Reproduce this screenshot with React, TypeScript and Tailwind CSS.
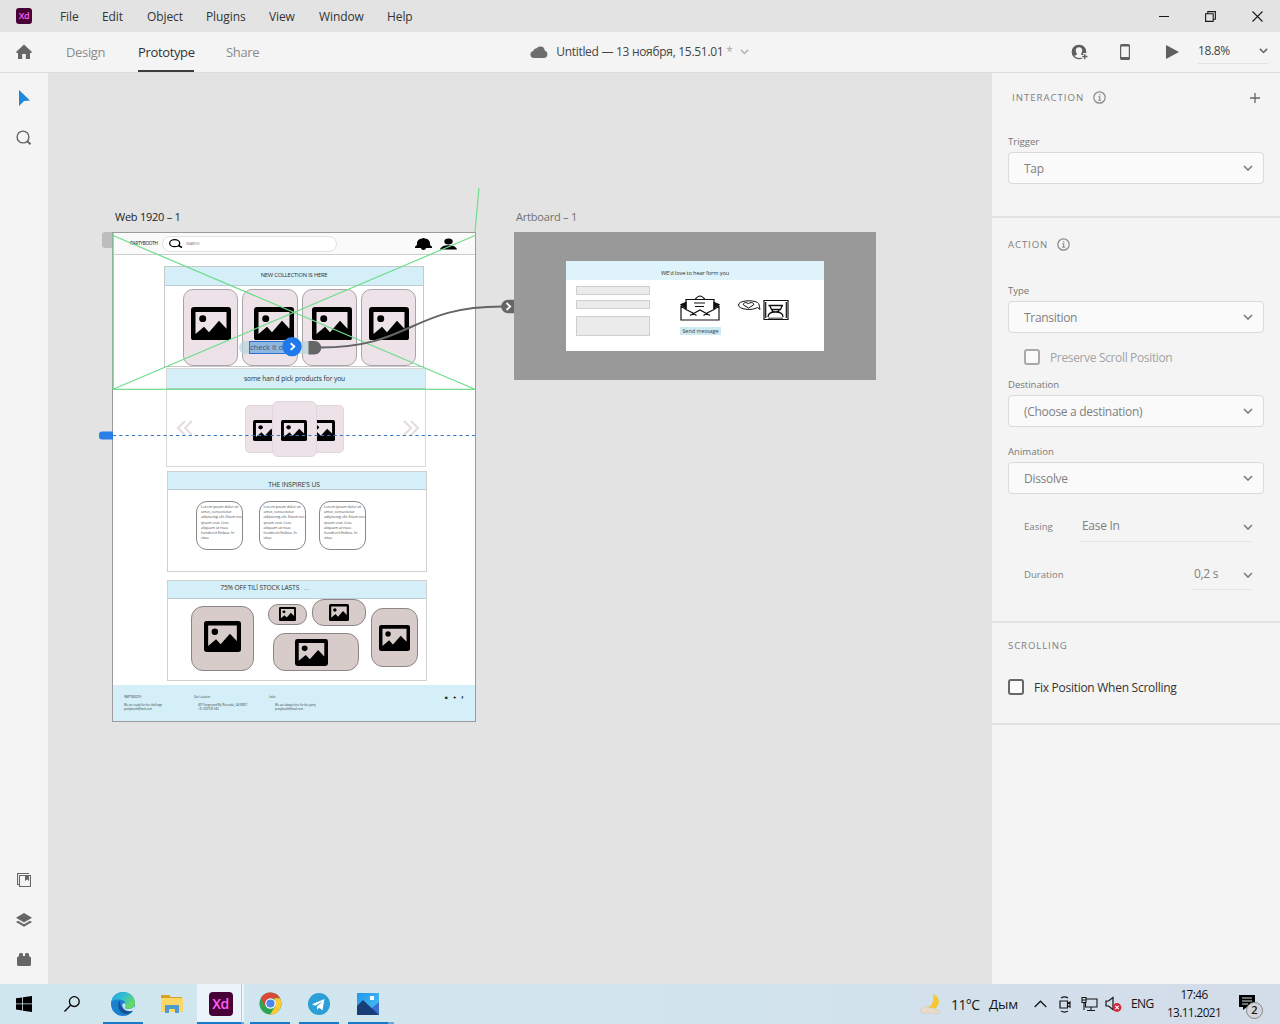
import type { ReactNode } from "react";

const cx = (...c: (string | undefined)[]) => c.filter(Boolean).join(" ");

function Chevron({ className, w = 10 }: { className?: string; w?: number }) {
  return (
    <svg width={w} height={w * 0.6} viewBox="0 0 10 6" fill="none" stroke="currentColor" strokeWidth="1.7" className={cx("shrink-0", className)}>
      <path d="M1 1l4 4 4-4" />
    </svg>
  );
}

function MenuBar() {
  return (
    <header className="flex h-8 shrink-0 items-center bg-[#e3e3e3] text-[12px] tracking-[-0.1px] text-[#333]">
      <span className="ml-4 flex h-4 w-4 shrink-0 items-center justify-center rounded-[3px] bg-[#470137] text-[9px] font-semibold tracking-[-0.3px] text-[#ff61f6]">Xd</span>
      <nav className="flex pt-[2px]">
        <span className="ml-7 w-[42px]">File</span>
        <span className="w-[45px]">Edit</span>
        <span className="w-[59px]">Object</span>
        <span className="w-[63px]">Plugins</span>
        <span className="w-[50px]">View</span>
        <span className="w-[68px]">Window</span>
        <span>Help</span>
      </nav>
      <div className="ml-auto mr-[17px] flex items-center gap-9 text-[#1a1a1a]">
        <svg width="11" height="11" viewBox="0 0 11 11" stroke="currentColor"><path d="M1 5.500h10" /></svg>
        <svg width="11" height="11" viewBox="0 0 11 11" fill="none" stroke="currentColor" strokeWidth="1.1"><path d="M.6 2.800h7.600v7.600H.6zM2.800 2.800V.6h7.600v7.600H8.200" /></svg>
        <svg width="11" height="11" viewBox="0 0 11 11" stroke="currentColor" strokeWidth="1.1"><path d="M.5.5l10 10M10.500.5l-10 10" /></svg>
      </div>
    </header>
  );
}

function Toolbar() {
  return (
    <div className="flex h-[41px] shrink-0 border-b border-[#dcdcdc] bg-[#f4f4f4] text-[13px] tracking-[-0.35px] text-[#8b8b8b]">
      <svg className="ml-4 mt-3 shrink-0 text-[#666]" width="16" height="16" viewBox="0 0 16 16" fill="currentColor"><path d="M8 .6L16 8l-.8.900H14V15H9.800V10H6.200v5H2V8.900H.8L0 8z" /></svg>
      <div className="ml-[34px] flex leading-[40px]">
        <span className="w-[72px]">Design</span>
        <span className="h-10 w-[56px] border-b-2 border-[#3c3c3c] text-[#333]">Prototype</span>
        <span className="ml-8">Share</span>
      </div>
      <div className="ml-[271px] flex h-10 items-center text-[12px] text-[#444]">
        <svg width="18" height="12" viewBox="0 0 18 12" className="mr-2 fill-[#6e6e6e]"><path d="M4 12a3.600 3.600 0 01-.8-7.100A3.500 3.500 0 016.600 2.300 4.500 4.500 0 0114.700 4.500 3.900 3.900 0 0114.500 12z" /></svg>
        <span className="w-[167px] whitespace-nowrap tracking-[-0.3px]">Untitled — 13 ноября, 15.51.01</span>
        <span className="ml-[3px] w-[13px] text-[#aaa]">*</span>
        <Chevron w={9} className="ml-px text-[#b5b5b5]" />
      </div>
      <div className="ml-auto flex h-10 items-center text-[#5f5f5f]">
        <svg width="18" height="17" viewBox="0 0 18 17" fill="none">
          <circle cx="8" cy="8" r="6.700" stroke="currentColor" strokeWidth="1.200" />
          <path d="M8 1A7 7 0 002.300 12.200C4 11.200 6 11.400 6 10 4 7.500 4.300 3.200 8 3.200s4 4.300 2 6.800c0 1.400 2.200 1.200 3.700 2.200A7 7 0 008 1z" fill="currentColor" />
          <path d="M10 12.500h8M13.700 9v8" stroke="#f4f4f4" strokeWidth="3" /><path d="M11.200 12.500h5.300M13.800 10v5.300" stroke="currentColor" strokeWidth="1.300" />
        </svg>
        <svg className="ml-[31px]" width="10" height="16" viewBox="0 0 10 16"><rect x=".6" y=".6" width="8.800" height="14.800" rx="1" fill="none" stroke="currentColor" strokeWidth="1.200" /><path d="M1 1h8v1.500H1zM1 13h8v2.500H1z" fill="currentColor" /></svg>
        <svg className="ml-[36px]" width="13" height="14" viewBox="0 0 13 14" fill="currentColor"><path d="M0 0l13 7-13 7z" /></svg>
        <div className="ml-[19px] mr-3 flex h-6 w-[70px] items-center justify-between border-b border-[#e2e2e2] pb-px text-[12px] tracking-[-0.4px] text-[#444]">
          18.8%
          <Chevron w={9} className="text-[#666]" />
        </div>
      </div>
    </div>
  );
}

function ToolRail() {
  return (
    <aside className="flex w-12 shrink-0 flex-col items-center bg-[#f4f4f4] text-[#666]">
      <svg className="mt-[17px]" width="12" height="16" viewBox="0 0 12 16"><path d="M1 0l11 10.500-6 .6L1 16z" fill="#1e88dc" /></svg>
      <svg className="mt-6" width="16" height="16" viewBox="0 0 16 16" fill="none" stroke="currentColor"><circle cx="7" cy="7" r="5.900" strokeWidth="1.400" /><path d="M11 11l3.500 3.300" strokeWidth="2" /></svg>
      <svg className="mt-auto" width="14" height="14" viewBox="0 0 14 14" fill="none" stroke="currentColor" strokeWidth="1.100"><path d="M2.500 2.500h11v11h-11zM11.500 1V.5H.5v11h1.800" /><path d="M8 2.500h4V8L10 6.500 8 8z" fill="currentColor" stroke="none" /></svg>
      <svg className="mt-[25px]" width="16" height="16" viewBox="0 0 16 16" fill="currentColor"><path d="M8 1l8 4.800-8 4.800-8-4.800z" /><path d="M2 8.700l6 3.600 6-3.600 2 1.200-8 4.900-8-4.900z" /></svg>
      <svg className="mb-[18px] mt-[25px]" width="14" height="13" viewBox="0 0 14 13" fill="currentColor"><path d="M0 4.500L2 3V1l1-1h2l1 1v2h2V1l1-1h2l1 1v2l2 1.500V12l-1 1H1l-1-1z" /></svg>
    </aside>
  );
}

/* Placeholder picture glyph; the window shape is cut out in the colour behind it. */
function Picture({ w, h, bg = "#ece2e8", className }: { w: number; h: number; bg?: string; className?: string }) {
  return (
    <svg width={w} height={h} viewBox="0 0 40 34" preserveAspectRatio="none" className={cx("block shrink-0", className)}>
      <rect width="40" height="34" rx="3" />
      <path d="M4.500 5h31v17L28 14 18 25.500 13 20 4.500 27.500z" fill={bg} />
      <circle cx="11.700" cy="11.800" r="3.500" />
    </svg>
  );
}

function Band({ children, className }: { children: ReactNode; className?: string }) {
  return <div className={cx("flex items-center justify-center whitespace-nowrap border-b border-[#bcccd2] bg-[#d4eff8] text-[#333]", className)}>{children}</div>;
}

function LoremCard({ className }: { className?: string }) {
  return (
    <div className={cx("h-[49px] w-[47px] shrink-0 whitespace-nowrap rounded-[11px] border border-[#888] bg-white pl-1 pt-[2px] text-[3.900px] leading-[5.200px] tracking-[-0.13px] text-[#555]", className)}>
      Lorem ipsum dolor sit<br />amet, consectetur<br />adipiscing elit. Etiam nec<br />ipsum erat. Cras<br />aliquam ut risus<br />hendrerit finibus. In<br />vitae
    </div>
  );
}

function Tile({ className, w, h }: { className: string; w: number; h: number }) {
  return (
    <div className={cx("absolute border border-[#8d8585] bg-[#d8ccca]", className)}>
      <Picture w={w} h={h} bg="#d8ccca" />
    </div>
  );
}

function FooterCol({ head, a, b, className }: { head: string; a: string; b: string; className: string }) {
  return (
    <div className={cx("whitespace-nowrap text-[2.700px] leading-[4px] text-[#333]", className)}>
      <div className="mb-1">{head}</div>
      <div className="pl-[var(--indent)]">{a}</div>
      <div className="pl-[var(--indent)]">{b}</div>
    </div>
  );
}

function WebArtboard() {
  return (
    <div className="absolute left-[64px] top-[159px] flex h-[490px] w-[364px] flex-col border border-[#9b9b9b] bg-white">
      <div className="flex h-[22px] shrink-0 items-center border-b border-[#ccc] bg-[#fafafa]">
        <span className="ml-[17px] w-[32px] text-[4.700px] tracking-[-0.25px] text-[#111]">PARTYBOOTH</span>
        <div className="flex h-4 w-[175px] items-center rounded-full border border-[#e2e2e2] bg-white pl-[5px]">
          <svg width="15" height="9" viewBox="0 0 15 9" fill="none" stroke="black" strokeWidth="1.300"><ellipse cx="6.700" cy="4.200" rx="5" ry="3.500" /><path d="M10.300 6.500l3.700 2" strokeWidth="1.600" /></svg>
          <span className="ml-[3px] text-[4px] tracking-[-0.3px] text-[#777]">SEARCH</span>
        </div>
        <svg className="ml-[78px]" width="17" height="12" viewBox="0 0 17 12"><path d="M7.500 0h2v.5c4 .3 5.500 2.500 5.500 5.200 0 1.300.5 2.300 2 2.800V10H0V8.500c1.500-.5 2-1.500 2-2.800C2 3 3.500.8 7.500.500zM6 10h5c0 2.500-5 2.500-5 0z" /></svg>
        <svg className="ml-2" width="17" height="12" viewBox="0 0 17 12"><ellipse cx="8.500" cy="3.400" rx="4.200" ry="3" /><path d="M0 11.500C.5 8.800 4.500 7.300 8.500 7.300s8 1.500 8.500 4.200z" /></svg>
      </div>

      <section className="ml-[51px] mt-[11px] h-[101px] w-[260px] shrink-0 border border-[#c8c8c8]">
        <Band className="h-[19px] pb-px text-[5.800px] tracking-[-0.21px]">NEW COLLECTION IS HERE</Band>
        <div className="ml-[18px] mt-[3px] flex gap-1">
          {["ml-[6.700px]", "ml-[10.700px]", "ml-[9.300px]", "ml-[6.700px]"].map((m, i) => (
            <div key={i} className="h-[77px] w-[55.300px] rounded-[10px] border border-[#aaa4a8] bg-[#ece2e8] pt-[16.500px]">
              <Picture w={40} h={33.5} className={m} />
            </div>
          ))}
        </div>
      </section>

      <section className="ml-[53px] mt-px h-[99px] w-[260px] shrink-0 border border-[#d8d8d8]">
        <Band className="h-[20px] pr-[3px] pt-px text-[6.700px] tracking-[-0.1px]">some han d pick products for you</Band>
        <div className="mt-[12px] flex items-center justify-between pl-[9px] pr-[5px]">
          <svg className="mb-[2px]" width="17" height="16" viewBox="0 0 17 16" fill="none" stroke="#e6dce2" strokeWidth="2.200"><path d="M9 1L2 8l7 7M16 1L9 8l7 7" /></svg>
          <div className="mr-2 flex items-center">
            <div className="flex h-[48px] w-[27px] items-center overflow-hidden rounded-l-[5px] border border-r-0 border-[#e0d5db] bg-[#ece2e8] pl-[7px] pt-[3px]"><Picture w={26} h={21} /></div>
            <div className="flex h-[56px] w-[45px] items-center justify-center rounded-[6px] border border-[#e0d5db] bg-[#ece2e8] pt-[3px]"><Picture w={26} h={21} /></div>
            <div className="flex h-[48px] w-[27px] items-center justify-end overflow-hidden rounded-r-[5px] border border-l-0 border-[#e0d5db] bg-[#ece2e8] pr-[8px] pt-[3px]"><Picture w={26} h={21} /></div>
          </div>
          <svg className="mb-[2px]" width="17" height="16" viewBox="0 0 17 16" fill="none" stroke="#e6dce2" strokeWidth="2.200"><path d="M1 1l7 7-7 7M8 1l7 7-7 7" /></svg>
        </div>
      </section>

      <section className="ml-[54px] mt-1 h-[101px] w-[260px] shrink-0 border border-[#d0d0d0]">
        <Band className="h-[18px] pr-[6px] pt-[9px] text-[6.700px] tracking-[-0.15px]">THE INSPIRE'S US</Band>
        <div className="ml-[28px] mt-[11px] flex">
          <LoremCard />
          <LoremCard className="ml-[15.500px]" />
          <LoremCard className="ml-[13.500px]" />
        </div>
      </section>

      <section className="relative ml-[54px] mt-2 h-[101px] w-[260px] shrink-0 border border-[#d0d0d0]">
        <Band className="h-[18px] pb-[3px] pr-[65px] text-[6.700px] tracking-[-0.15px]">75% OFF TILl STOCK LASTS &nbsp; <span className="text-[#999]">&nbsp;...</span></Band>
        <Tile className="left-[23px] top-[25px] h-[65px] w-[63px] rounded-[12px] pl-3 pt-[14px]" w={37} h={31} />
        <Tile className="left-[100px] top-[23px] h-[21px] w-[39px] rounded-[10px] pl-[10px] pt-[2px]" w={17} h={14} />
        <Tile className="left-[144px] top-[18px] h-[27px] w-[54px] rounded-[12px] pl-4 pt-1" w={20} h={17} />
        <Tile className="left-[105px] top-[52px] h-[38px] w-[86px] rounded-[12px] pl-[21px] pt-[5px]" w={33} h={27} />
        <Tile className="left-[203px] top-[27px] h-[59px] w-[47px] rounded-[12px] pl-[7px] pt-[16px]" w={31} h={26} />
      </section>

      <footer className="mt-auto flex h-[36px] shrink-0 bg-[#d4eff8] pt-[9.500px]">
        <FooterCol className="ml-[11px] w-[70px] [--indent:0px]" head="PARTYBOOTH" a="We are ready for the challenge" b="partybooth@mail.com" />
        <FooterCol className="w-[75px] [--indent:4px]" head="Our Location" a="407 Fairground Rd, Riverside, CA 90857" b="+91 200 976 543" />
        <FooterCol className="w-[176px] [--indent:6px]" head="Links" a="We are always here for the party" b="partybooth@mail.com" />
        <div className="flex gap-[5.500px] text-[4px] font-bold leading-[5px]"><span>◙</span><span>✦</span><span>f</span></div>
      </footer>
    </div>
  );
}

function ContactArtboard() {
  return (
    <div className="absolute left-[466px] top-[159px] h-[148px] w-[362px] bg-[#999] pl-[52px] pt-[29px]">
      <div className="h-[90px] w-[258px] bg-white">
        <div className="flex h-[19px] items-center justify-center bg-[#dff3fa] pt-[5px] text-[5.700px] tracking-[-0.14px] text-[#333]">WE'd love to hear form you</div>
        <div className="flex">
          <div className="ml-[10px] w-[74px] pt-[6px]">
            <div className="h-[9px] border border-[#cfcfcf] bg-[#ebebeb]" />
            <div className="mt-[5px] h-[9px] border border-[#cfcfcf] bg-[#ebebeb]" />
            <div className="mt-[7px] h-5 border border-[#cfcfcf] bg-[#ebebeb]" />
          </div>
          <div className="ml-[30px] w-[41px] pt-[15px]">
            <svg width="40" height="26" viewBox="0 0 40 26" fill="none" stroke="#111" strokeWidth="1.200">
              <path d="M6 8.500L1 11v14h38V11l-5-2.500M1 11l5 3.500 6 3M39 11l-5 3.500-6 3M6 14V4.500h28V14M15 4.500C17 2 18.500 1 20 1s3 1 5 3.500M10 20.500l10-5.500 10 5.500M12 17.500l4.500 3M28 17.500l-4.500 3M14 8h11M15 11.500h9" />
              <path d="M1 9.500l5-2v5.500zM39 9.500l-5-2v5.500z" fill="#111" />
            </svg>
            <div className="mt-[6px] h-[8px] whitespace-nowrap bg-[#cdeaf2] text-center text-[5.500px] leading-[8px] tracking-[-0.05px] text-[#345]">Send message</div>
          </div>
          <svg className="ml-[16px] mt-[19px]" width="53" height="24" viewBox="0 0 53 24" fill="none" stroke="#111" strokeWidth="1">
            <path d="M20.500 8.500C15 12 1.500 10.500 1.500 6S15 .5 20.500 3.500c2 1.300 1.500 3 2.500 7zM11.500 9L6.500 6C5.500 3.800 9 2.800 11.500 4.500 14 2.800 17.500 3.800 16.500 6z" />
            <path d="M27 1.500h24v19H27zM28.700 3v16M49.300 3v16" strokeWidth="1.200" />
            <path d="M31.500 6.500h14.500M33 7l1.500 3.500h9L45 7M35 10.500c0 3.500 7 3.500 7 0M31 18c0-3.500 3-5 7.500-5s7.500 1.500 7.500 5" strokeWidth="1.300" />
            <path d="M31 18.500h15v1.500H31z" fill="#777" stroke="none" />
          </svg>
        </div>
      </div>
    </div>
  );
}

function Canvas() {
  return (
    <main className="relative min-w-0 flex-1 overflow-hidden bg-[#e3e3e3]">
      <span className="absolute left-[67px] top-[136px] text-[11px] leading-4 tracking-[-0.25px] text-[#222]">Web 1920 – 1</span>
      <span className="absolute left-[468px] top-[136px] text-[11px] leading-4 tracking-[-0.2px] text-[#707070]">Artboard – 1</span>
      <div className="absolute left-[54px] top-[159px] h-[16px] w-[10px] rounded-l-[3px] bg-[#bdbdbd]" />
      <WebArtboard />
      <ContactArtboard />
      <div className="absolute left-[191px] top-[268px] h-[13px] w-[82px] rounded-full bg-[#b9d4dc]/70" />
      <div className="absolute left-[201px] top-[268px] h-[13px] w-[48px] overflow-hidden whitespace-nowrap border border-[#2b72cf] bg-[#8fb6df] text-[7.500px] leading-[11px] text-[#3b5475]">check it out</div>
      <svg className="absolute left-0 top-0" width="943" height="911" viewBox="48 73 943 911" fill="none">
        <path d="M113 235.500L475 389.300M475 235.500L113 389.300M113.200 233v156.300H475M475 232l4-44" stroke="#6fdd8c" strokeWidth="1.200" />
        <path d="M113 435.500h362" stroke="#3576bd" strokeWidth="1.200" strokeDasharray="3.200 3.100" />
        <path d="M99 434.500a3 3 0 013-3h11v8h-11a3 3 0 01-3-3z" fill="#2a7fe8" />
        <path d="M320 347.500C411 347.500 411 306.500 502 306.500" stroke="#646464" strokeWidth="2" />
        <path d="M308.500 341h6a6.800 6.800 0 010 13.600h-6zM514 299.700h-6a6.800 6.800 0 000 13.600h6z" fill="#666" />
        <path d="M506.500 303l3.800 3.500-3.800 3.500" stroke="#fff" strokeWidth="1.700" />
        <circle cx="292" cy="346.600" r="9.700" fill="#1f79ea" />
        <path d="M290.700 343.300l3.600 3.300-3.600 3.300" stroke="#fff" strokeWidth="1.900" />
      </svg>
    </main>
  );
}

function Info() {
  return (
    <svg width="13" height="13" viewBox="0 0 13 13" fill="none" stroke="#888" className="shrink-0"><circle cx="6.500" cy="6.500" r="5.700" strokeWidth="1.200" /><path d="M5.300 5.800h1.400v3.400M5.200 9.300h2.900M6 3.700h1.300" strokeWidth="1.100" /></svg>
  );
}

function Field({ label, value, className }: { label: string; value: string; className?: string }) {
  return (
    <div className={className}>
      <div className="h-[19px] pt-px text-[9.600px] leading-4 tracking-[-0.03px] text-[#777]">{label}</div>
      <div className="flex h-8 items-center justify-between rounded-[4px] border border-[#dadada] bg-[#fafafa] pl-[15px] pr-[10px] text-[12px] tracking-[-0.3px]">
        <span className="pt-px">{value}</span>
        <Chevron />
      </div>
    </div>
  );
}

function Inspector() {
  return (
    <aside className="flex w-[288px] shrink-0 flex-col bg-[#f4f4f4] text-[#808080]">
      <section className="h-[145px] border-b-2 border-[#e2e2e2] px-4 pt-4">
        <div className="flex h-4 items-center pl-1 text-[9.600px] tracking-[1px]">
          <span className="w-[81px] pt-[3px]">INTERACTION</span><Info />
          <svg className="ml-auto mr-1 mt-px" width="10" height="10" viewBox="0 0 10 10" stroke="#666" strokeWidth="1.300"><path d="M0 5h10M5 0v10" /></svg>
        </div>
        <Field className="mt-7" label="Trigger" value="Tap" />
      </section>
      <section className="h-[405px] border-b-2 border-[#e2e2e2] px-4 pt-[18px]">
        <div className="flex h-4 items-center text-[9.600px] tracking-[0.9px]"><span className="w-[49px] pt-[3px]">ACTION</span><Info /></div>
        <Field className="mt-[30px]" label="Type" value="Transition" />
        <div className="ml-4 mt-4 flex h-4 items-center gap-[10px] text-[12px] tracking-[-0.35px] text-[#a3a3a3]">
          <span className="h-4 w-4 rounded-[3px] border-2 border-[#a9a9a9] bg-[#fafafa]" /><span className="pt-[2px]">Preserve Scroll Position</span>
        </div>
        <Field className="mt-[11px]" label="Destination" value="(Choose a destination)" />
        <Field className="mt-4" label="Animation" value="Dissolve" />
        <div className="ml-4 mr-3 mt-[17px] flex h-[31px] items-center">
          <span className="w-[56px] pt-[2px] text-[9.600px]">Easing</span>
          <div className="flex h-full flex-1 items-center justify-between border-b border-[#e4e4e4] pl-[2px] text-[12px] tracking-[-0.3px]">Ease In<Chevron className="-mr-px mt-[2px]" /></div>
        </div>
        <div className="ml-4 mr-3 mt-[17px] flex h-[31px] items-center">
          <span className="w-[168px] pt-[2px] text-[9.600px]">Duration</span>
          <div className="flex h-full flex-1 items-center justify-between border-b border-[#e4e4e4] pl-[2px] text-[12px] tracking-[-0.3px]">0,2 s<Chevron className="-mr-px mt-[2px]" /></div>
        </div>
      </section>
      <section className="h-[102px] border-b-2 border-[#e2e2e2] px-4 pt-[15px]">
        <div className="text-[9.600px] leading-4 tracking-[0.9px]">SCROLLING</div>
        <div className="mt-[25px] flex h-4 items-center gap-[10px] text-[12px] tracking-[-0.27px] text-[#333]">
          <span className="h-4 w-4 rounded-[3px] border-2 border-[#666] bg-[#fafafa]" /><span className="pt-[2px]">Fix Position When Scrolling</span>
        </div>
      </section>
    </aside>
  );
}

function App({ children }: { children: ReactNode }) {
  return <div className="mr-[9px] flex h-10 w-10 items-center justify-center border-b-2 border-[#1979ca] pt-px">{children}</div>;
}

function Taskbar() {
  return (
    <footer className="flex h-10 shrink-0 items-center bg-linear-to-r from-[#d0e6ee] via-[#d1e5ee] to-[#d3dce9] text-[#151515]">
      <svg className="ml-4" width="16" height="16" viewBox="0 0 16 16"><path d="M0 2.300l6.200-.9v6.100H0zM7 1.300L16 0v7.500H7zM0 8.300h6.200v6.200L0 13.600zM7 8.300h9V16l-9-1.300z" /></svg>
      <svg className="ml-8" width="16" height="16" viewBox="0 0 16 16" fill="none" stroke="black" strokeWidth="1.300"><circle cx="10.300" cy="5.600" r="4.900" /><path d="M6.600 9.300L.5 15.500" /></svg>
      <div className="ml-[23px] flex">
        <App>
          <svg width="24" height="24" viewBox="0 0 24 24">
            <defs><linearGradient id="edgeTop" x1="0" y1="0" x2="1" y2=".6"><stop stopColor="#2a9fe0" /><stop offset=".5" stopColor="#31bfd0" /><stop offset="1" stopColor="#6bdc5a" /></linearGradient></defs>
            <circle cx="12" cy="12" r="12" fill="#1a80cf" />
            <path d="M.4 9.500C1.600 4 6.200 0 12 0c7 0 12 5 12 10.500 0 4-3 6.300-6.300 6.300-2.700 0-4.500-1-3.800-2 1.300-1.700 1-6.800-5-7.300C5 7.200 1.800 7.800.4 9.500z" fill="url(#edgeTop)" />
            <path d="M9 8.500c-3 3-2.500 11 4.500 13.500 4 .5 7-.8 9-4-1.500.7-3 1-4.500 1-5 0-9.500-4-9-10.500z" fill="#155394" />
            <path d="M14 11.500c1 1.500.5 2.700-.1 3.400-.7 1 1 2 3.800 2 2.500 0 4.500-1.200 5.500-3L24 18l-1.800.7C16 20.500 11.500 17 11.300 13.500c0-1.500 1.500-2.500 2.700-2z" fill="#d0e6ee" />
          </svg>
        </App>
        <div className="mr-[5px] flex h-10 w-10 items-center justify-center">
          <svg width="22" height="20" viewBox="0 0 22 20"><path d="M0 1h8l2 2h11v5H0z" fill="#d9a021" /><path d="M0 4h22v14H0z" fill="#fbd768" /><path d="M4 19v-8h14v8h-4v-4H8v4z" fill="#4f9bd0" /></svg>
        </div>
        <div className="flex h-10 w-[45px] items-center justify-center border-b-2 border-r border-b-[#1979ca] border-r-[#aecfe0] bg-[#eaf4fa] pl-[3px] pt-px">
          <span className="flex h-6 w-6 items-center justify-center rounded-[4px] bg-[#470137] text-[14px] font-semibold tracking-[-0.5px] text-[#ff61f6]">Xd</span>
        </div>
        <div className="mr-[6px] h-10 w-[2px] border-b-2 border-[#66a9d8] bg-[#eaf4fa]" />
        <App>
          <svg width="23" height="23" viewBox="0 0 48 48"><circle cx="24" cy="24" r="23" fill="#2fa455" /><path d="M24 1a23 23 0 0120 12H24L13 30 4 12.500A23 23 0 0124 1z" fill="#dc4838" /><path d="M44 13a23 23 0 01-21 34l11-17-2-17z" fill="#fbca35" /><circle cx="24" cy="24" r="11" fill="#fff" /><circle cx="24" cy="24" r="8.500" fill="#4b86ee" /></svg>
        </App>
        <App>
          <svg width="22" height="22" viewBox="0 0 22 22"><circle cx="11" cy="11" r="11" fill="#2c9fd6" /><path d="M4 11.300L16.500 6l-2 11.300-3.500-2.600-2 2v-3.300l5.500-5-7.300 4.300z" fill="#fff" /></svg>
        </App>
        <div className="flex h-10 w-10 items-center justify-center border-b-2 border-[#1979ca] pt-px">
          <svg width="22" height="22" viewBox="0 0 22 22"><defs><linearGradient id="sky" x2="1" y2="1"><stop stopColor="#2496ec" /><stop offset="1" stopColor="#4cc3f2" /></linearGradient></defs><path d="M0 0h22v22H0z" fill="url(#sky)" /><path d="M22 9v13h-9l-3-3z" fill="#3a70cf" /><path d="M0 13l6-6 16 15H0z" fill="#193f78" /><path d="M13 3h4v4h-4z" fill="#f2f8ff" /></svg>
        </div>
        <div className="h-10 w-[6px] border-b-2 border-[#66a9d8]" />
      </div>
      <div className="ml-auto flex h-10 items-center">
        <svg width="24" height="22" viewBox="0 0 24 22"><path d="M13 1c6 2 8 9 3 14-4 3-9 3-12 0 6 0 11-5 9-14z" fill="#f8c72e" /><path d="M2 20a2.500 2.500 0 011-4.800 4.500 4.500 0 017-.2c3-1 5 .5 5 2h4a1.800 1.800 0 010 3.300z" fill="#eadccb" stroke="#d3bfa5" strokeWidth=".5" /></svg>
        <span className="ml-[7px] w-[38px] text-[14px] tracking-[-0.6px]">11°C</span>
        <span className="w-[45px] pt-px text-[13.500px] tracking-[-0.2px]">Дым</span>
        <svg width="13" height="8" viewBox="0 0 13 8" fill="none" stroke="currentColor" strokeWidth="1.300"><path d="M.7 7l5.800-5.800L12.300 7" /></svg>
        <svg className="ml-3" width="12" height="17" viewBox="0 0 12 17" fill="none" stroke="currentColor" strokeWidth="1.200"><path d="M2 2c2-1.200 5-1.200 7 0M2 15c2 1.200 5 1.200 7 0M1 5h7.500v7H1zM8.500 7.500L11 6v5L8.500 9.800" /></svg>
        <svg className="ml-[10px]" width="17" height="16" viewBox="0 0 17 16" fill="none" stroke="currentColor" strokeWidth="1.100"><path d="M5.500 3h10.500v8H4.500V7M10 11v3M6 14.500h8M1 1.500h4v5H1zM1 4h4M3 6.500V14" /></svg>
        <svg className="ml-[7px]" width="17" height="16" viewBox="0 0 17 16" fill="none" stroke="currentColor" strokeWidth="1.200"><path d="M1 5h2.500L8 1.500v12L3.500 10H1z" /><circle cx="12" cy="11.500" r="4.400" fill="#d02c3c" stroke="none" /><path d="M10.300 9.800l3.400 3.400M13.700 9.800l-3.400 3.400" stroke="#fff" /></svg>
        <span className="ml-[9px] w-[28px] text-[12px] tracking-[-0.6px]">ENG</span>
        <div className="ml-[7px] flex w-[56px] flex-col items-center pb-[2px] text-[11.800px] leading-[18px] tracking-[-0.6px]"><span>17:46</span><span className="whitespace-nowrap">13.11.2021</span></div>
        <div className="relative ml-[17px] h-6 w-[41px]">
          <svg className="mt-[2px]" width="17" height="18" viewBox="0 0 17 18"><path d="M0 1h16v12H8l-4 3v-3H0z" /><path d="M3 4h10M3 7h10M3 10h6" stroke="#d3dce9" strokeWidth="1.100" /></svg>
          <span className="absolute left-[7px] top-[10px] flex h-[17px] w-[17px] items-center justify-center rounded-full border border-[#888] bg-[#d3d5d8] text-[11px] font-semibold">2</span>
        </div>
      </div>
    </footer>
  );
}

export default function Screen() {
  return (
    <div className="flex h-[1024px] w-[1280px] flex-col overflow-hidden bg-[#e3e3e3] font-['Open_Sans','Noto_Sans',sans-serif]">
      <MenuBar />
      <Toolbar />
      <div className="flex min-h-0 flex-1">
        <ToolRail />
        <Canvas />
        <Inspector />
      </div>
      <Taskbar />
    </div>
  );
}
